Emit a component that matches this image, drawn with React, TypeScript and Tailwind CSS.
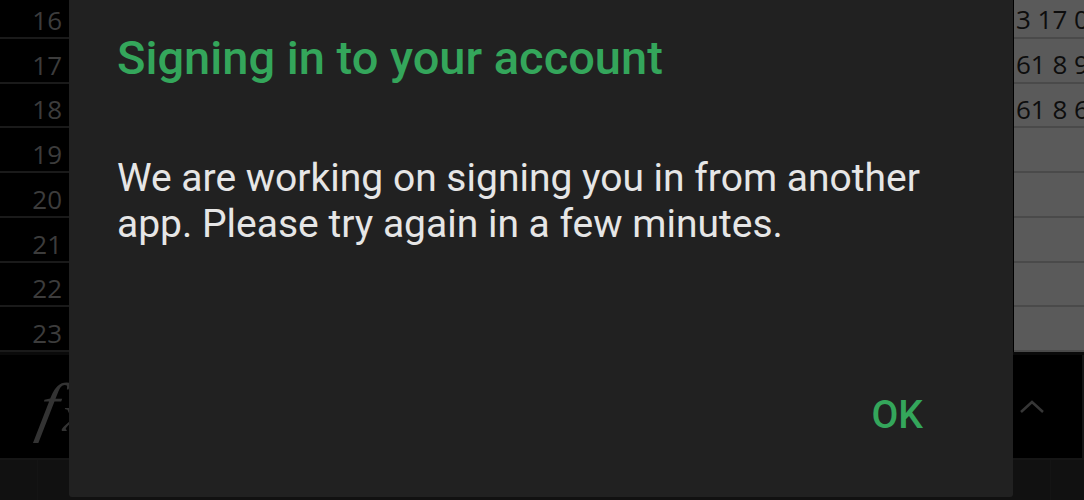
import React from "react";

const rows = ["16", "17", "18", "19", "20", "21", "22", "23"];
const cells = ["3 17 0", "61 8 9", "61 8 6", "", "", "", "", ""];

export default function App() {
  return (
    <div className="relative w-[1084px] h-[500px] overflow-hidden bg-black" style={{ fontFamily: "Roboto, 'Noto Sans', sans-serif" }}>
      {/* background spreadsheet */}
      <div className="flex flex-col w-full h-full">
        <div className="flex h-[352px] overflow-hidden">
          <div className="w-[69px] flex flex-col -mt-[6px]">
            {rows.map((r) => (
              <div key={r} className="h-[44.75px] shrink-0 border-b-2 border-[#1a1a1a] flex items-center justify-end pr-[7px] pt-[9px] text-[26px] leading-none text-[#3c3c3c]" style={{ fontFamily: "'Open Sans', sans-serif" }}>
                {r}
              </div>
            ))}
          </div>
          <div className="flex-1" />
          <div className="w-[70px] bg-[#5a5a5a] flex flex-col -mt-[6px] overflow-hidden">
            {cells.map((c, i) => (
              <div key={i} className="h-[44.75px] shrink-0 border-b-2 border-[#4a4a4a] flex items-center pl-[2px] pt-[8px] text-[26px] leading-none text-[#0d0d0d] whitespace-nowrap" style={{ fontFamily: "'Open Sans', sans-serif" }}>
                {c}
              </div>
            ))}
          </div>
        </div>
        <div className="h-[106px] flex border-t-[3px] border-[#0a0a0a]">
          <div className="w-[69px] flex items-center overflow-hidden">
            <span className="text-[66px] italic text-[#333] leading-none ml-[40px] whitespace-nowrap -skew-x-12" style={{ fontFamily: "'Liberation Serif', serif" }}>f</span>
            <span className="text-[50px] italic text-[#333] leading-none ml-[4px] mt-[14px] whitespace-nowrap" style={{ fontFamily: "'Liberation Serif', serif" }}>x</span>
          </div>
          <div className="flex-1" />
          <div className="w-[70px] flex items-center justify-start pl-[4px] border-r-2 border-[#151515]">
            <svg width="28" height="16" viewBox="0 0 28 16" fill="none">
              <path d="M3 13 L14 3 L25 13" stroke="#363636" strokeWidth="2.5" />
            </svg>
          </div>
        </div>
        <div className="h-[42px] flex bg-[#111] border-t-2 border-[#161616]">
          <div className="w-[38px] border-r border-[#141414]" />
          <div className="flex-1" />
          <div className="w-[34px] border-l border-[#141414]" />
        </div>
      </div>

      {/* dialog */}
      <div className="absolute left-[69px] top-[-4px] w-[944px] h-[501px] bg-[#212121] rounded-b-[3px] flex flex-col pl-[48px] pr-[48px]">
        <div className="pt-[34px] text-[47px] leading-[56px] font-medium text-[#34a65b] whitespace-nowrap">Signing in to your account</div>
        <div className="mt-[69px] text-[39px] leading-[46px] text-[#e6e6e6]">
          We are working on signing you in from another app. Please try again in a few minutes.
        </div>
        <div className="mt-auto mb-[62px] flex justify-end pr-[42px]">
          <span className="text-[39px] font-medium text-[#34a65b] leading-none">OK</span>
        </div>
      </div>
    </div>
  );
}
